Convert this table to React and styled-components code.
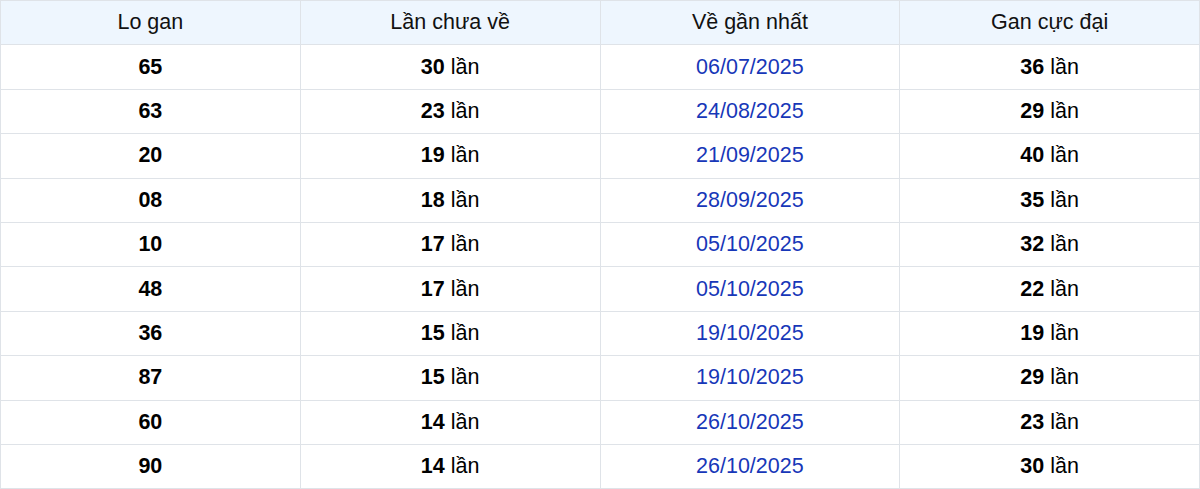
import React from "react";
import styled, { createGlobalStyle } from "styled-components";

const GlobalStyle = createGlobalStyle`
  body {
    margin: 0;
    background: #ffffff;
    font-family: "Liberation Sans", Arial, sans-serif;
  }
`;

const Table = styled.table`
  width: 100%;
  border-collapse: collapse;
  table-layout: fixed;
  font-size: 21.5px;
  color: #000;
  th, td {
    border: 1px solid #dfe3e8;
    text-align: center;
    vertical-align: middle;
    padding: 0;
  }
  tr {
    height: 44.4px;
  }
`;

const Head = styled.th`
  background: #eef6fe;
  font-weight: 400;
  color: #111;
`;

const Cell = styled.td`
  color: ${({ $blue }) => ($blue ? "#1737b8" : "#000")};
  font-weight: ${({ $bold }) => ($bold ? 700 : 400)};
`;

const Num = styled.b`
  font-weight: 700;
`;

const rows = [
  ["65", "30", "06/07/2025", "36"],
  ["63", "23", "24/08/2025", "29"],
  ["20", "19", "21/09/2025", "40"],
  ["08", "18", "28/09/2025", "35"],
  ["10", "17", "05/10/2025", "32"],
  ["48", "17", "05/10/2025", "22"],
  ["36", "15", "19/10/2025", "19"],
  ["87", "15", "19/10/2025", "29"],
  ["60", "14", "26/10/2025", "23"],
  ["90", "14", "26/10/2025", "30"],
];

const App = () => {
  return (
    <>
      <GlobalStyle />
      <Table>
        <thead>
          <tr>
            <Head>Lo gan</Head>
            <Head>Lần chưa về</Head>
            <Head>Về gần nhất</Head>
            <Head>Gan cực đại</Head>
          </tr>
        </thead>
        <tbody>
          {rows.map((r, i) => (
            <tr key={i}>
              <Cell $bold>{r[0]}</Cell>
              <Cell>
                <Num>{r[1]}</Num> lần
              </Cell>
              <Cell $blue>{r[2]}</Cell>
              <Cell>
                <Num>{r[3]}</Num> lần
              </Cell>
            </tr>
          ))}
        </tbody>
      </Table>
    </>
  );
};

export default App;
